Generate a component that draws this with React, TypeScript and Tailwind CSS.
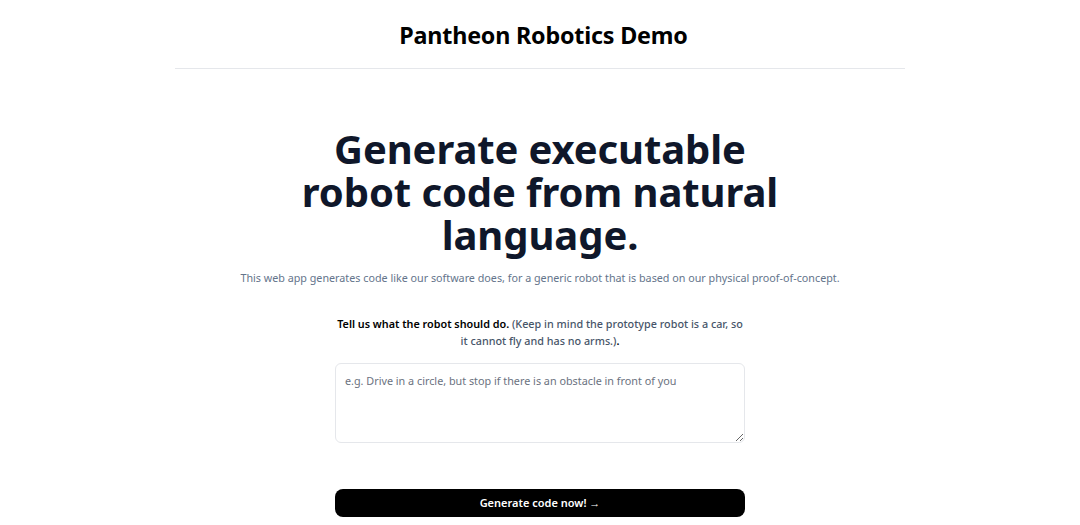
import React from "react";

export default function App() {
  return (
    <div className="min-h-screen bg-white text-black" style={{ fontFamily: '"Noto Sans", "Open Sans", sans-serif' }}>
      <header className="mx-auto w-[730px] border-b border-gray-200 h-[69px] flex items-center justify-center">
        <h1 className="mt-[3px] ml-[7px] text-[23.3px] font-bold leading-none tracking-[-0.2px]">Pantheon Robotics Demo</h1>
      </header>
      <main className="flex flex-col items-center">
        <h2 className="mt-[58px] w-[500px] text-center text-[40px] leading-[43px] font-bold text-[#0f172a] tracking-[-0.1px]">
          Generate executable robot code from natural language.
        </h2>
        <p className="mt-[12px] text-[10.75px] leading-[20px] text-[#64748b]">
          This web app generates code like our software does, for a generic robot that is based on our physical proof-of-concept.
        </p>
        <div className="mt-[27px] w-[410px] flex flex-col">
          <p className="text-center text-[10.8px] leading-[17px] font-semibold whitespace-nowrap">
            Tell us what the robot should do.{" "}
            <span className="text-[#475569] font-medium">
              (Keep in mind the prototype robot is a car, so
              <br />
              it cannot fly and has no arms.)
            </span>
            .
          </p>
          <textarea
            className="mt-[14px] h-[80px] w-full rounded-md border border-gray-200 px-[9px] py-[7px] text-[10.8px] leading-[20px] placeholder:text-[#6b7280] outline-none"
            placeholder="e.g. Drive in a circle, but stop if there is an obstacle in front of you"
          />
          <button className="mt-[46px] h-[28px] w-full rounded-lg bg-black text-white text-[11px] font-semibold">
            Generate code now! →
          </button>
        </div>
      </main>
    </div>
  );
}
